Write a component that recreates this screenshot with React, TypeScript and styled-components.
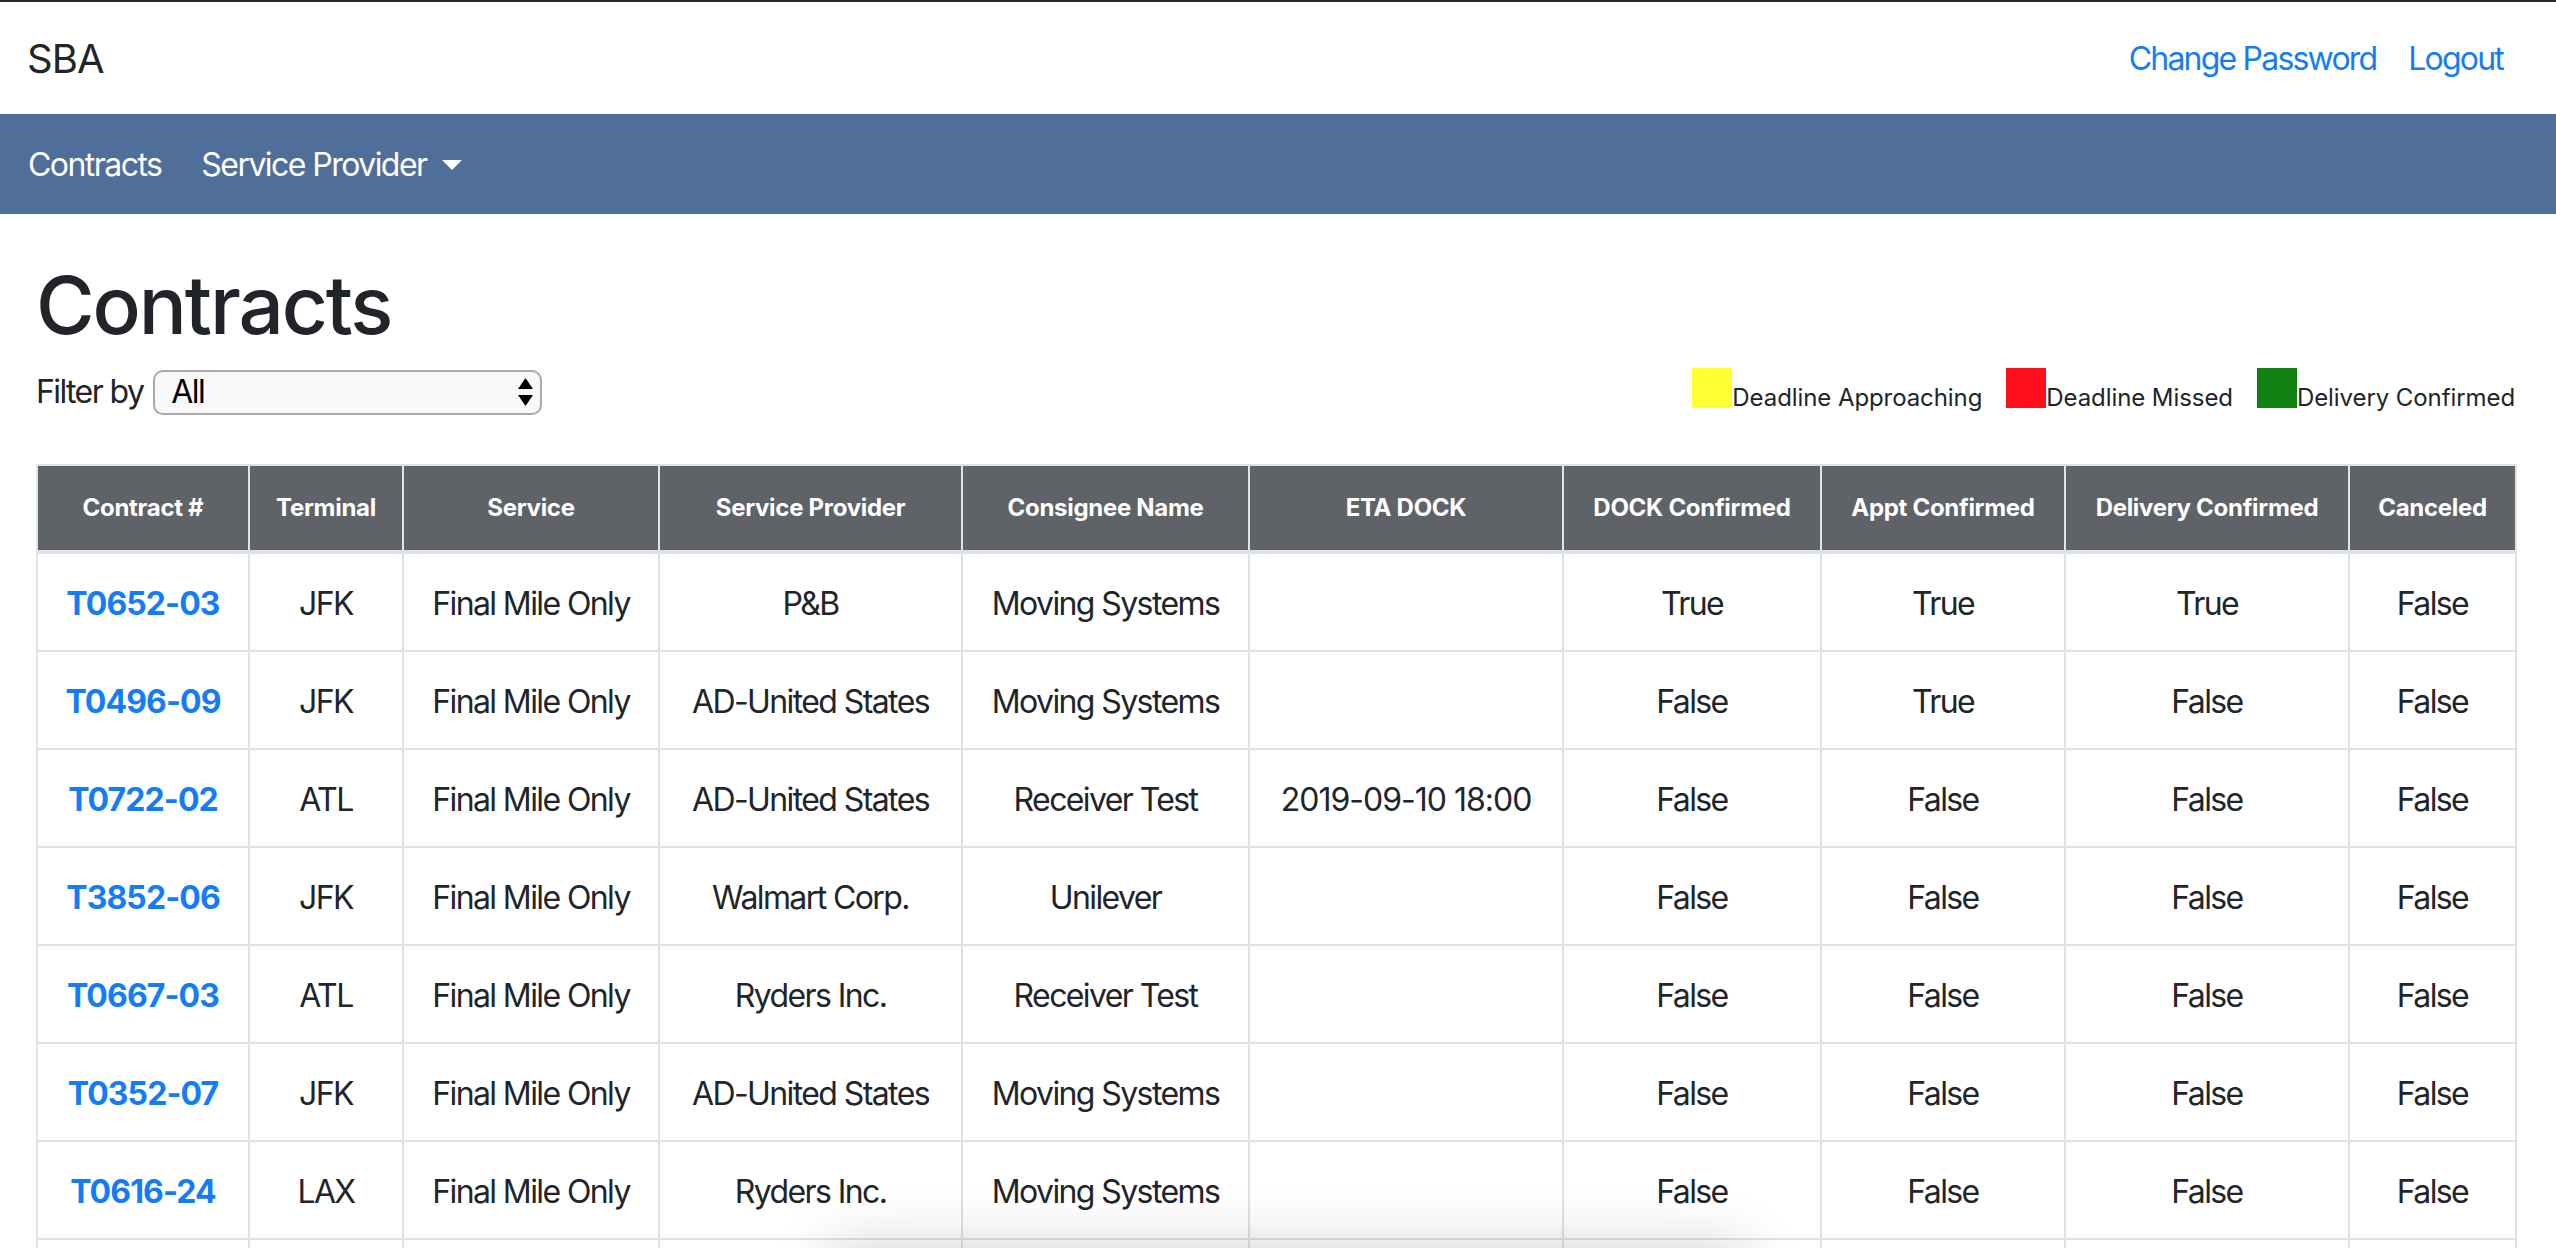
import React from "react";
import styled, {createGlobalStyle} from "styled-components";

const colorLink = "#147cf8";
const colorText = "#212529";
const colorLine = "#dee2e6";

const GlobalStyle = createGlobalStyle`
    html, body {
        margin: 0;
        padding: 0;
        height: 100%;
        overflow: hidden;
        background-color: #ffffff;
    }
    body {
        font-family: Inter, "Liberation Sans", sans-serif;
        font-size: 32px;
        line-height: 48px;
        letter-spacing: -1.6px;
        color: ${colorText};
    }
`

const Header = styled.header`
    display: flex;
    justify-content: space-between;
    align-items: center;
    height: 110px;
    padding: 2px 53px 0 27px;
    border-top: 2px solid #24282c;
`

const Brand = styled.div`
    font-size: 40px;
    letter-spacing: -0.9px;
`

const HeaderLinks = styled.div`
    display: flex;
    gap: 32px;
    letter-spacing: -1.8px;
`

const HeaderLink = styled.a`
    color: ${colorLink};
`

const NavBar = styled.nav`
    display: flex;
    align-items: center;
    gap: 40px;
    height: 98px;
    padding: 2px 28px 0;
    background-color: #506e9a;
    color: #ffffff;
`

const NavItem = styled.a`
    display: flex;
    align-items: center;
    color: #ffffff;
    letter-spacing: -1.55px;
`

const Caret = styled.span`
    width: 0;
    height: 0;
    margin-left: 15px;
    border-top: 10px solid #ffffff;
    border-left: 10px solid transparent;
    border-right: 10px solid transparent;
`

const Main = styled.main`
    padding: 43px 41px 0 36px;
`

const Title = styled.h1`
    margin: 0 0 15px;
    font-size: 80px;
    font-weight: 500;
    line-height: 96px;
    letter-spacing: -2.1px;
`

const Toolbar = styled.div`
    display: flex;
    justify-content: space-between;
    align-items: flex-start;
    height: 96px;
`

const FilterGroup = styled.div`
    display: flex;
    align-items: center;
    gap: 10px;
`

const SelectBox = styled.div`
    box-sizing: border-box;
    display: flex;
    justify-content: space-between;
    align-items: center;
    width: 389px;
    height: 45px;
    padding: 0 7px 0 16px;
    border: 2px solid #a9a9a9;
    border-radius: 10px;
    background-color: #f8f8f8;
    color: #000000;
`

const Legend = styled.div`
    display: flex;
    gap: 24px;
    font-size: 24px;
    line-height: 32px;
    letter-spacing: -0.08px;
`

const LegendItem = styled.div`
    display: flex;
    align-items: flex-end;
`

const Swatch = styled.span<{color: string}>`
    display: block;
    width: 40px;
    height: 40px;
    background-color: ${props => props.color};
`

const LegendLabel = styled.span`
    position: relative;
    top: 6px;
`

const Table = styled.table`
    width: 2479px;
    table-layout: fixed;
    border-collapse: collapse;
    text-align: center;
`

const HeadCell = styled.th`
    padding: 24px;
    border: 2px solid ${colorLine};
    border-bottom-width: 4px;
    background-color: #5f6367;
    color: #ffffff;
    font-size: 24px;
    font-weight: 700;
    line-height: 36px;
    letter-spacing: -0.3px;
`

const Cell = styled.td<{numeric?: boolean}>`
    padding: 26px 8px 22px;
    height: 48px;
    border: 2px solid ${colorLine};
    white-space: nowrap;
    letter-spacing: ${props => props.numeric ? "-1px" : "-1.6px"};
`

const ContractLink = styled.a`
    color: ${colorLink};
    font-weight: 700;
    letter-spacing: -0.9px;
`

// sits below the bottom edge of the window, only its shadow shows
const BottomShadow = styled.div`
    position: fixed;
    left: 825px;
    bottom: -50px;
    width: 925px;
    height: 50px;
    border-radius: 20px;
    box-shadow: 0 0 60px rgba(0, 0, 0, 0.2);
    pointer-events: none;
`

const columns = [
    {title: "Contract #", width: 212},
    {title: "Terminal", width: 154},
    {title: "Service", width: 256},
    {title: "Service Provider", width: 303},
    {title: "Consignee Name", width: 287},
    {title: "ETA DOCK", width: 314},
    {title: "DOCK Confirmed", width: 258},
    {title: "Appt Confirmed", width: 244},
    {title: "Delivery Confirmed", width: 284},
    {title: "Canceled", width: 167}
];

const rows = [
    ["T0652-03", "JFK", "Final Mile Only", "P&B", "Moving Systems", "", "True", "True", "True", "False"],
    ["T0496-09", "JFK", "Final Mile Only", "AD-United States", "Moving Systems", "", "False", "True", "False", "False"],
    ["T0722-02", "ATL", "Final Mile Only", "AD-United States", "Receiver Test", "2019-09-10 18:00", "False", "False", "False", "False"],
    ["T3852-06", "JFK", "Final Mile Only", "Walmart Corp.", "Unilever", "", "False", "False", "False", "False"],
    ["T0667-03", "ATL", "Final Mile Only", "Ryders Inc.", "Receiver Test", "", "False", "False", "False", "False"],
    ["T0352-07", "JFK", "Final Mile Only", "AD-United States", "Moving Systems", "", "False", "False", "False", "False"],
    ["T0616-24", "LAX", "Final Mile Only", "Ryders Inc.", "Moving Systems", "", "False", "False", "False", "False"],
    ["", "", "", "", "", "", "", "", "", ""]
];

export default function App(): React.ReactElement {
    return <>
        <GlobalStyle/>
        <Header>
            <Brand>SBA</Brand>
            <HeaderLinks>
                <HeaderLink>Change Password</HeaderLink>
                <HeaderLink>Logout</HeaderLink>
            </HeaderLinks>
        </Header>
        <NavBar>
            <NavItem>Contracts</NavItem>
            <NavItem>Service Provider<Caret/></NavItem>
        </NavBar>
        <Main>
            <Title>Contracts</Title>
            <Toolbar>
                <FilterGroup>
                    Filter by
                    <SelectBox>
                        All
                        <svg width="15" height="28" viewBox="0 0 15 28">
                            <path d="M7.5 0L15 11H0z M0 17H15L7.5 28z" fill="#000000"/>
                        </svg>
                    </SelectBox>
                </FilterGroup>
                <Legend>
                    <LegendItem><Swatch color="#ffff33"/><LegendLabel>Deadline Approaching</LegendLabel></LegendItem>
                    <LegendItem><Swatch color="#ff0f1c"/><LegendLabel>Deadline Missed</LegendLabel></LegendItem>
                    <LegendItem><Swatch color="#108010"/><LegendLabel>Delivery Confirmed</LegendLabel></LegendItem>
                </Legend>
            </Toolbar>
            <Table>
                <colgroup>
                    {columns.map(column => <col key={column.title} width={column.width}/>)}
                </colgroup>
                <thead>
                    <tr>
                        {columns.map(column => <HeadCell key={column.title}>{column.title}</HeadCell>)}
                    </tr>
                </thead>
                <tbody>
                    {rows.map((row, rowIndex) => <tr key={rowIndex}>
                        {row.map((value, index) => <Cell key={index} numeric={index === 5}>
                            {index === 0 ? <ContractLink>{value}</ContractLink> : value}
                        </Cell>)}
                    </tr>)}
                </tbody>
            </Table>
        </Main>
        <BottomShadow/>
    </>
}
